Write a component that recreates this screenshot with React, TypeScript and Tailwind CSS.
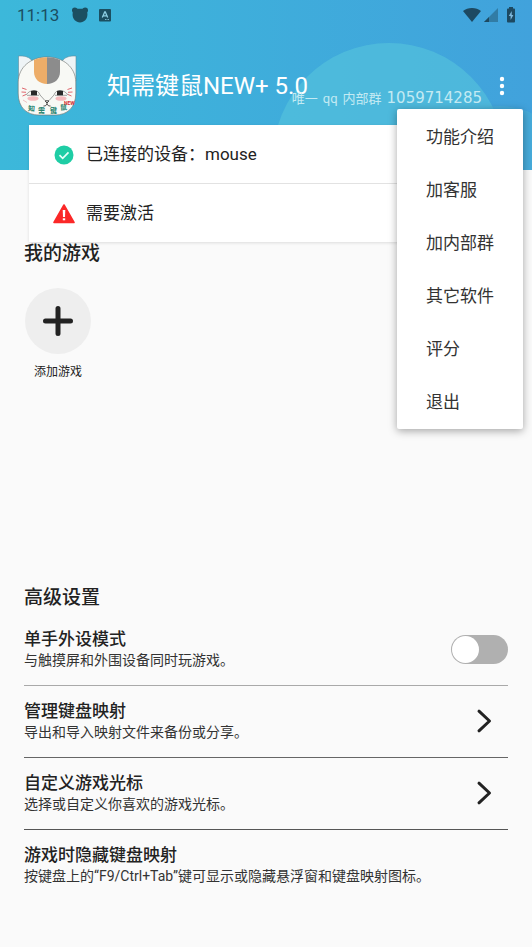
import { useState } from 'react'

type MenuItem = { id: string; label: string }

type Setting = {
  id: string
  title: string
  description: string
  kind: 'toggle' | 'link' | 'info'
  border: string
}

const MENU_ITEMS: MenuItem[] = [
  { id: 'intro', label: '功能介绍' },
  { id: 'service', label: '加客服' },
  { id: 'group', label: '加内部群' },
  { id: 'apps', label: '其它软件' },
  { id: 'rate', label: '评分' },
  { id: 'exit', label: '退出' },
]

const SETTINGS: Setting[] = [
  {
    id: 'one-hand',
    title: '单手外设模式',
    description: '与触摸屏和外围设备同时玩游戏。',
    kind: 'toggle',
    border: 'border-b border-[#a9a9a9]',
  },
  {
    id: 'mapping',
    title: '管理键盘映射',
    description: '导出和导入映射文件来备份或分享。',
    kind: 'link',
    border: 'border-b border-[#666666]',
  },
  {
    id: 'cursor',
    title: '自定义游戏光标',
    description: '选择或自定义你喜欢的游戏光标。',
    kind: 'link',
    border: 'border-b border-[#555555]',
  },
  {
    id: 'hide',
    title: '游戏时隐藏键盘映射',
    description: '按键盘上的“F9/Ctrl+Tab”键可显示或隐藏悬浮窗和键盘映射图标。',
    kind: 'info',
    border: '',
  },
]

function StatusBar() {
  return (
    <div className="relative flex h-[30px] items-center pr-4 pl-[17px] text-[#1b4f61]">
      <span className="text-[17px] leading-5">11:13</span>
      <svg className="ml-3" width="18" height="16" viewBox="0 0 18 16" fill="currentColor" aria-hidden="true">
        <circle cx="3.8" cy="3.2" r="2.8" />
        <circle cx="14.2" cy="3.2" r="2.8" />
        <path d="M4 1.8h10c1.8 1.2 2.4 3.2 2.4 5.8 0 4.8-3.2 7.8-7.4 7.8s-7.400-3-7.400-7.800C1.600 5 2.200 3 4 1.800Z" />
      </svg>
      <svg className="ml-[10px]" width="12" height="13" viewBox="0 0 12 13" aria-hidden="true">
        <rect width="12" height="12.5" rx="1" fill="currentColor" />
        <path d="M3.300 8.500 5.700 3h.6l2.400 5.500M4.200 6.800h3.600" fill="none" stroke="#8ccfe3" strokeWidth="1.3" />
        <path d="M6 10.500h4" stroke="#8ccfe3" strokeWidth="0.8" strokeDasharray="1 0.5" />
      </svg>

      <div className="ml-auto flex items-center">
        <svg width="20" height="16" viewBox="0 0 20 16" aria-hidden="true">
          <path d="M10 15 1 4C3.400 2 6.500 1 10 1s6.600 1 9 3Z" fill="#1d4961" />
        </svg>
        <svg className="ml-[2px]" width="14" height="14" viewBox="0 0 14 14" aria-hidden="true">
          <path d="M14 0v14H0Z" fill="#317ca5" />
          <path d="M5 9v5H0Z" fill="#1d4961" />
        </svg>
        <svg className="ml-2" width="10" height="16" viewBox="0 0 10 16" aria-hidden="true">
          <path d="M3 0h4v1.500h1.200c.6 0 .8.4.8.900v12.200c0 .6-.3.900-.9.900H1.900c-.6 0-.9-.3-.9-.9V2.400c0-.5.3-.9.900-.9H3Z" fill="#1d4961" />
          <path d="M5.700 4 2.800 9h1.800v4l2.800-5H5.700Z" fill="#7fb9df" />
        </svg>
      </div>
    </div>
  )
}

function CatLogo() {
  return (
    <svg width="60" height="62" viewBox="0 0 60 62" role="img" aria-label="知需键鼠">
      <path d="M1.500 26V1c6-.3 11 .8 14 5.200M59 26V1c-6-.3-11 .8-14 5.200" fill="#eef4f6" stroke="#5f8c9c" strokeWidth="0.6" />
      <path
        d="M30 2C14 2 1.500 12 1.200 27v11C1.200 53 10 60 22 60h16c12 0 20.800-7 20.800-22V27C58.500 12 46 2 30 2Z"
        fill="#f8f9f5"
        stroke="#6c6f6c"
        strokeWidth="0.6"
      />
      <path d="M17 5C21 3 25 2.200 30 2.200V29c-7.500 0-13-5-13-12Z" fill="#edad68" />
      <path d="M43 5C39 3 35 2.200 30 2.200V29c7.500 0 13-5 13-12Z" fill="#8c8c8c" />
      <path
        d="M9 40c2-3 5-4.500 8-4.500s5 1.500 6 4.500l4.500 5M51 40c-2-3-5-4.500-8-4.500s-5 1.500-6 4.500l-4.500 5"
        fill="none"
        stroke="#666"
        strokeWidth="0.6"
      />
      <path d="M10 40.300h12M38 40.300h12" stroke="#666" strokeWidth="0.6" />
      <path d="M14 36c2-.8 4-.8 6 0v4.300h-6ZM40 36c2-.8 4-.8 6 0v4.300h-6Z" fill="#292929" />
      <ellipse cx="16" cy="43.500" rx="5.500" ry="2.300" fill="#f6b9bc" />
      <ellipse cx="44" cy="43.500" rx="5.500" ry="2.300" fill="#f6b9bc" />
      <path
        d="m5 33 4.500 1.500M4.500 37l4.500.3M5.500 41l3.500-1.500M55 33l-4.500 1.500M55.500 37l-4.500.3M54.500 41 51 39.500"
        stroke="#d9424c"
        strokeWidth="0.8"
      />
      <path d="M28 45.800h4L30 48ZM30 47.500V49M26.500 51c1.800 0 3-.6 3.500-2 .5 1.400 1.700 2 3.500 2" fill="none" stroke="#333" strokeWidth="0.9" />
      <path d="m6 45 4 2.500" stroke="#e9a7aa" strokeWidth="0.7" />
      <g fill="#27836f" fontSize="7" fontWeight="700">
        <text x="11" y="56" transform="rotate(5 14 53)">知</text>
        <text x="21" y="58">需</text>
        <text x="33" y="58">键</text>
        <text x="43" y="55" transform="rotate(-5 46 52)">鼠</text>
      </g>
      <text x="47" y="50" fill="#d62f36" fontSize="5" fontWeight="700">NEW</text>
    </svg>
  )
}

function Header({ onToggleMenu, menuOpen }: { onToggleMenu: () => void; menuOpen: boolean }) {
  return (
    <header className="relative overflow-hidden bg-linear-to-r from-[#3cb8da] to-[#41a2dc] pb-7">
      <svg className="absolute top-0 right-0" width="260" height="170" viewBox="0 0 260 170" aria-hidden="true">
        <circle cx="117" cy="159" r="116" fill="#57c5dc" fillOpacity="0.6" />
        <circle cx="228" cy="179" r="73" fill="#4bb3d8" fillOpacity="0.5" />
      </svg>
      <StatusBar />
      <div className="relative flex h-[112px] items-center pr-5 pl-[17px]">
        <CatLogo />
        <h1 className="ml-[30px] text-2xl text-white">知需键鼠NEW+ 5.0</h1>
        <button
          type="button"
          aria-label="更多"
          aria-expanded={menuOpen}
          onClick={onToggleMenu}
          className="ml-auto flex w-5 justify-center"
        >
          <svg width="6" height="20" viewBox="0 0 6 20" fill="#fff" aria-hidden="true">
            <circle cx="3" cy="3" r="2.2" />
            <circle cx="3" cy="10" r="2.2" />
            <circle cx="3" cy="17" r="2.2" />
          </svg>
        </button>
        <p className="absolute right-[50px] bottom-[33px] flex items-baseline gap-[5px] text-[13px] leading-5 text-[#c3eaf3]">
          <span>唯一</span>
          <span>qq</span>
          <span>内部群</span>
          <span className="font-['DejaVu_Sans'] text-[15px]">1059714285</span>
        </p>
      </div>
    </header>
  )
}

function OverflowMenu() {
  return (
    <div
      role="menu"
      className="absolute top-[109px] right-[9px] z-20 w-[126px] rounded-xs bg-white py-px shadow-[0_2px_8px_rgba(0,0,0,0.35)]"
    >
      {MENU_ITEMS.map((item) => (
        <button
          key={item.id}
          type="button"
          role="menuitem"
          className="flex h-[53px] w-full items-center pt-[2px] pl-[29px] text-[17px] text-[#333]"
        >
          {item.label}
        </button>
      ))}
    </div>
  )
}

function StatusCard() {
  return (
    <div className="relative z-10 mx-[29px] -mt-[45px] bg-white text-[17px] text-[#222] shadow-[0_1px_3px_rgba(0,0,0,0.12)]">
      <div className="flex h-[59px] items-center border-b border-[#e2e2e2] pt-[2px] pl-6">
        <svg width="22" height="20" viewBox="0 0 22 20" aria-hidden="true">
          <circle cx="11" cy="10" r="9.5" fill="#1fcda5" />
          <path d="m6.500 10.200 3.200 3.200 5.800-6" fill="none" stroke="#e8fff9" strokeWidth="1.7" />
        </svg>
        <span className="ml-[11px]">已连接的设备：mouse</span>
      </div>
      <div className="flex h-[58px] items-center pt-[2px] pl-6">
        <svg width="22" height="20" viewBox="0 0 22 20" aria-hidden="true">
          <path d="M11 1 21 18.500H1Z" fill="#fb2828" stroke="#fb2828" strokeWidth="1.6" strokeLinejoin="round" />
          <path d="M9.700 6h2.600l-.3 7h-2Z" fill="#fff" />
          <rect x="9.8" y="14.3" width="2.4" height="2" fill="#fff" />
        </svg>
        <span className="ml-[11px]">需要激活</span>
      </div>
    </div>
  )
}

function SettingRow({ setting }: { setting: Setting }) {
  const [enabled, setEnabled] = useState(false)

  const text = (
    <span className="block">
      <span className="block text-[17px] leading-[22px] font-medium">{setting.title}</span>
      <span className="block text-sm leading-5 text-[#333]">{setting.description}</span>
    </span>
  )

  if (setting.kind === 'toggle') {
    return (
      <label htmlFor={setting.id} className={`flex items-center justify-between pt-[14px] pb-[15px] ${setting.border}`}>
        {text}
        <input
          id={setting.id}
          type="checkbox"
          checked={enabled}
          onChange={(e) => setEnabled(e.target.checked)}
          className="h-[29px] w-[57px] shrink-0 appearance-none rounded-full bg-[#b0b0b0] p-px before:block before:size-[27px] before:rounded-full before:bg-white checked:bg-[#3cb6da] checked:before:translate-x-7"
        />
      </label>
    )
  }

  if (setting.kind === 'link') {
    return (
      <button
        type="button"
        className={`flex w-full items-center justify-between pt-[14px] pr-4 pb-[15px] text-left ${setting.border}`}
      >
        {text}
        <svg width="16" height="26" viewBox="0 0 16 26" aria-hidden="true">
          <path d="M3 3.200 13.500 13 3 22.800" fill="none" stroke="#222" strokeWidth="3" strokeLinecap="round" strokeLinejoin="round" />
        </svg>
      </button>
    )
  }

  return <div className="pt-[14px] pb-[15px]">{text}</div>
}

export default function App() {
  const [menuOpen, setMenuOpen] = useState(true)

  return (
    <div className="relative min-h-screen bg-[#fafafa] font-[Roboto,'Noto_Sans_CJK_SC',sans-serif] text-[#222]">
      <Header menuOpen={menuOpen} onToggleMenu={() => setMenuOpen(!menuOpen)} />
      {menuOpen && <OverflowMenu />}

      <main>
        <StatusCard />

        <section className="px-6">
          <h2 className="text-[19px] leading-6 font-medium">我的游戏</h2>
          <button type="button" className="mt-[22px] flex w-[68px] flex-col items-center">
            <span className="flex size-[66px] items-center justify-center rounded-full bg-[#eeeeee]">
              <svg width="30" height="30" viewBox="0 0 30 30" aria-hidden="true">
                <path d="M15 2.500v25M2.500 15h25" stroke="#222" strokeWidth="5" strokeLinecap="round" />
              </svg>
            </span>
            <span className="mt-[10px] text-xs leading-4">添加游戏</span>
          </button>
        </section>

        <section className="mt-[206px] px-6">
          <h2 className="text-[19px] leading-6 font-medium">高级设置</h2>
          <div className="mt-1">
            {SETTINGS.map((setting) => (
              <SettingRow key={setting.id} setting={setting} />
            ))}
          </div>
        </section>
      </main>
    </div>
  )
}
